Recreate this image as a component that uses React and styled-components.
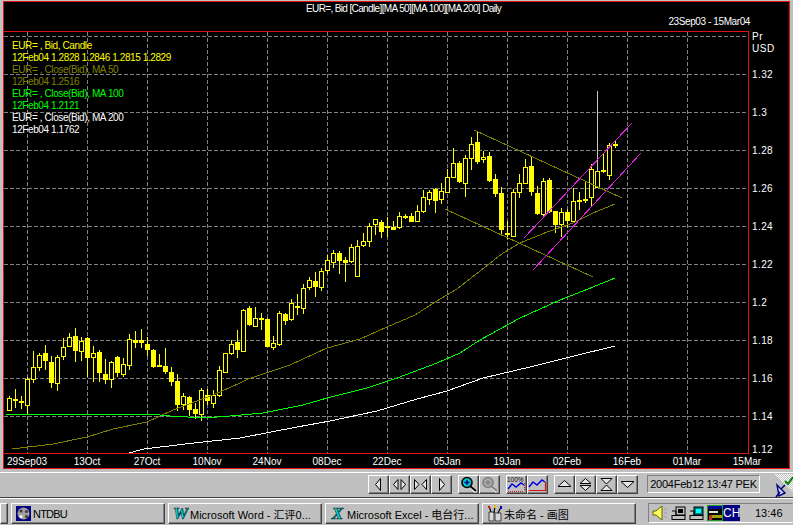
import React from "react";
import styled, { createGlobalStyle } from "styled-components";

const GlobalStyle = createGlobalStyle`
  html, body {
    margin: 0;
    padding: 0;
    background: #fff;
  }
  * {
    box-sizing: border-box;
  }
`;

const Desktop = styled.div`
  width: 793px;
  height: 525px;
  background: #c0c0c0;
  display: flex;
  flex-direction: column;
  padding-top: 1px;
  font-family: "Liberation Sans", Arial, "Noto Sans CJK SC", sans-serif;
  overflow: hidden;
`;

const ChartFrame = styled.div`
  width: 787px;
  height: 468px;
  margin-left: 3px;
  background: #000;
  border: 1px solid #e01010;
  color: #fff;
  font-size: 10px;
  flex: none;
  display: flex;
  flex-direction: column;
`;

const ChartHeader = styled.div`
  height: 29px;
  flex: none;
  line-height: 12px;
`;

const ChartTitle = styled.div`
  padding: 1px 0 0 302px;
  height: 14px;
  letter-spacing: -0.63px;
  white-space: nowrap;
`;

const ChartRange = styled.div`
  text-align: right;
  padding: 0 39px 0 0;
  letter-spacing: -0.4px;
`;

const ChartBody = styled.div`
  display: flex;
  height: 423px;
  flex: none;
`;

const Plot = styled.div`
  position: relative;
  width: 745px;
  height: 423px;
  border-top: 1px solid #e01010;
  border-right: 1px solid #e01010;
  border-bottom: 1px solid #e01010;
  svg {
    display: block;
  }
`;

const Legend = styled.div`
  position: absolute;
  left: 8px;
  top: 8px;
`;

const LegendLine = styled.div`
  height: 12px;
  line-height: 12px;
  white-space: nowrap;
  letter-spacing: -0.4px;
  color: ${(p) => p.$color};
`;

const PriceAxis = styled.div`
  flex: 1;
  display: flex;
  flex-direction: column;
  padding-left: 3px;
`;

const Unit = styled.div`
  height: 25px;
  flex: none;
  line-height: 12px;
  letter-spacing: 0.5px;
`;

const PriceLabel = styled.div`
  height: 38px;
  flex: none;
  line-height: 38px;
  letter-spacing: 0.4px;
  &:last-child {
    height: 18px;
    line-height: 27px;
  }
`;

const DateAxis = styled.div`
  display: grid;
  grid-template-columns: repeat(13, 60px);
  margin-left: -7px;
  padding-top: 1px;
  line-height: 13px;
  height: 14px;
  text-align: center;
  white-space: nowrap;
`;

const Toolbar = styled.div`
  height: 26px;
  margin-top: 3px;
  flex: none;
  border-top: 1px solid #fff;
  border-bottom: 1px solid #404040;
  display: flex;
  align-items: flex-start;
  gap: 6px;
  padding: 2px 0 0 368px;
`;

const ButtonGroup = styled.div`
  display: flex;
`;

const ToolButton = styled.div`
  width: 21px;
  height: 19px;
  background: #c0c0c0;
  border: 1px solid;
  border-color: #fff #404040 #404040 #fff;
  box-shadow: inset -1px -1px 0 #808080;
  display: flex;
  align-items: center;
  justify-content: center;
`;

const DateBox = styled.div`
  width: 119px;
  height: 18px;
  margin-left: 3px;
  border: 1px solid;
  border-color: #808080 #fff #fff #808080;
  font-size: 11px;
  letter-spacing: -0.25px;
  line-height: 16px;
  text-align: center;
  color: #000;
  white-space: nowrap;
`;

const LinkIcon = styled.div`
  margin: -1px 0 0 5px;
  line-height: 0;
`;

const Taskbar = styled.div`
  flex: 1;
  display: flex;
  gap: 3px;
  border-top: 1px solid #fff;
  padding-top: 4px;
`;

const TaskButton = styled.div`
  width: ${(p) => p.$width || 154}px;
  height: 21px;
  flex: none;
  background: #c0c0c0;
  border: 1px solid;
  border-color: #fff #404040 #404040 #fff;
  box-shadow: inset -1px -1px 0 #808080;
  display: flex;
  align-items: center;
  gap: ${(p) => p.$gap || 1}px;
  padding-left: ${(p) => p.$pad || 4}px;
  font-size: 11px;
  color: #000;
  white-space: nowrap;
  overflow: hidden;
`;

const TaskLabel = styled.span`
  letter-spacing: ${(p) => p.$spacing || 0}px;
`;

const Tray = styled.div`
  flex: 1;
  height: 20px;
  margin-left: 9px;
  border: 1px solid;
  border-color: #808080 #c0c0c0 #fff #808080;
  border-bottom: 1px solid #fff;
  display: flex;
  align-items: center;
  padding-left: 3px;
`;

const TrayIcons = styled.div`
  display: flex;
  align-items: center;
  gap: 3px;
`;

const LangBadge = styled.div`
  width: 17px;
  height: 16px;
  margin-left: -3px;
  background: #000080;
  color: #fff;
  font-size: 12px;
  line-height: 16px;
  text-align: center;
`;

const Clock = styled.div`
  margin-left: 15px;
  font-size: 11px;
  color: #000;
`;

// raw rows: wick top, wick bottom, body top, body bottom, kind (h hollow, f filled, d doji)
const toCandles = (base, rows) =>
  rows.map(([wt, wb, bt, bb, kind]) => ({
    wt: Math.round(base + wt / 3),
    wb: Math.round(base + wb / 3),
    bt: Math.round(base + bt / 3),
    bb: Math.round(base + bb / 3),
    kind,
  }));

const candles = [
  ...toCandles(320, [
    [228, 272, 235, 270, "h"], [208, 265, 238, 240, "d"], [228, 267, 243, 248, "f"], [172, 285, 178, 254, "h"],
    [93, 190, 142, 176, "h"], [98, 152, 106, 140, "h"], [75, 150, 100, 122, "f"], [108, 203, 126, 188, "f"],
    [105, 212, 112, 190, "h"], [55, 120, 80, 107, "h"], [38, 80, 52, 77, "h"], [25, 125, 48, 92, "f"],
    [52, 122, 62, 92, "h"], [50, 170, 55, 113, "f"], [78, 185, 100, 110, "h"], [90, 185, 97, 158, "f"],
    [118, 193, 162, 180, "f"], [122, 203, 127, 176, "h"], [108, 170, 111, 158, "f"], [115, 170, 133, 162, "h"],
    [43, 150, 57, 134, "h"], [33, 85, 60, 68, "f"], [27, 85, 60, 68, "f"], [50, 108, 72, 90, "f"],
    [88, 143, 90, 140, "f"], [102, 140, 135, 137, "d"], [85, 162, 138, 155, "f"], [140, 198, 156, 185, "f"],
    [162, 272, 183, 255, "f"], [218, 270, 229, 251, "h"], [228, 288, 232, 270, "f"], [250, 298, 267, 282, "f"],
    [204, 302, 211, 281, "h"], [207, 255, 226, 242, "f"], [210, 265, 226, 248, "h"], [138, 232, 151, 225, "h"],
    [98, 158, 99, 157, "h"], [60, 104, 73, 100, "h"], [30, 115, 67, 90, "f"],
  ]),
  ...toCandles(200, [
    [328, 455, 330, 452, "h"], [318, 378, 325, 375, "f"], [322, 380, 355, 377, "h"], [340, 390, 355, 358, "d"],
    [355, 442, 358, 440, "f"], [408, 450, 430, 440, "h"], [334, 438, 340, 432, "h"], [338, 375, 343, 362, "f"],
    [297, 362, 310, 358, "h"], [282, 345, 318, 322, "f"], [252, 342, 263, 323, "h"], [232, 270, 241, 260, "h"],
    [216, 290, 244, 260, "f"], [205, 272, 214, 260, "h"], [165, 222, 181, 209, "h"], [150, 204, 160, 185, "h"],
    [153, 222, 160, 182, "f"], [170, 245, 180, 188, "f"], [132, 190, 142, 182, "h"], [120, 232, 139, 227, "h"],
    [98, 140, 124, 134, "h"], [68, 140, 78, 122, "h"], [58, 105, 58, 73, "h"], [60, 113, 67, 95, "f"],
    [52, 112, 78, 80, "d"], [63, 90, 82, 89, "f"], [37, 87, 49, 80, "h"], [42, 57, 49, 51, "d"],
    [40, 67, 48, 65, "f"], [15, 65, 34, 62, "h"],
  ]),
  ...toCandles(90, [
    [300, 369, 321, 363, "h"], [300, 345, 307, 327, "h"], [295, 368, 297, 333, "f"], [278, 342, 304, 328, "h"],
    [238, 307, 262, 305, "h"], [175, 262, 220, 260, "h"], [212, 278, 220, 276, "f"], [195, 320, 205, 278, "h"],
    [140, 240, 163, 205, "h"], [122, 222, 156, 215, "f"], [182, 218, 202, 208, "h"], [187, 275, 198, 272, "f"],
    [252, 320, 268, 311, "f"], [290, 435, 310, 419, "f"], [393, 447, 430, 434, "f"], [298, 440, 307, 437, "h"],
    [252, 325, 280, 307, "h"], [207, 282, 232, 280, "h"], [197, 318, 229, 305, "f"], [287, 375, 310, 371, "f"],
    [264, 385, 274, 371, "h"], [264, 370, 271, 365, "f"], [362, 430, 364, 404, "f"], [354, 440, 367, 401, "h"],
    [358, 415, 367, 392, "f"], [295, 396, 334, 394, "h"], [305, 360, 330, 334, "f"], [277, 338, 327, 332, "f"],
    [222, 347, 236, 322, "h"], [230, 295, 244, 290, "h"], [190, 250, 241, 245, "f"], [158, 270, 166, 254, "h"],
    [150, 173, 162, 166, "f"],
  ]),
];

const ma50 = "12,449 53,444 87,437 113,429 147,422 173,410 213,395 240,383 248,379 290,365 327,348 360,339 387,327 415,315 440,299 457,289 480,271 503,253 520,243 547,232 573,223 593,213 615,204";
const ma100 = "5,414 40,415 60,414 150,414 170,416 205,418 230,416 263,413 303,405 327,398 367,388 397,378 437,363 460,353 480,340 520,318 560,300 588,289 615,278";
const ma200 = "125,454 144,449 185,444 240,438 297,427 330,421 377,411 417,399 447,391 483,378 530,367 570,357 615,346";

const hLines = [36, 74, 112, 150, 188, 226, 264, 302, 340, 378, 416];
const vLines = [27, 87, 147, 207, 267, 327, 387, 447, 507, 567, 627, 687];

function Candle({ index, c }) {
  const x = 9 + index * 6;
  return (
    <g>
      <line x1={x + 0.5} x2={x + 0.5} y1={c.wt} y2={c.wb} stroke="#ffff00" />
      {c.kind === "h" ? (
        <rect x={x - 1.5} y={c.bt + 0.5} width={4} height={c.bb - c.bt} fill="#000" stroke="#ffff00" />
      ) : (
        <rect x={x - 2} y={c.bt} width={5} height={Math.max(c.bb - c.bt, 2)} fill="#ffff00" />
      )}
    </g>
  );
}

function PriceChart() {
  return (
    <svg width="744" height="421" viewBox="4 32 744 421" shapeRendering="crispEdges">
      {hLines.map((y) => (
        <line key={y} x1="4" x2="748" y1={y + 0.5} y2={y + 0.5} stroke="#808080" strokeDasharray="4 2" />
      ))}
      {vLines.map((x) => (
        <line key={x} x1={x + 0.5} x2={x + 0.5} y1="32" y2="453" stroke="#808080" strokeDasharray="4 2" />
      ))}
      {candles.map((c, i) => (
        <Candle key={i} index={i} c={c} />
      ))}
      <line x1="597.5" x2="597.5" y1="91" y2="172" stroke="#c8c8c8" />
      <polyline points={ma50} fill="none" stroke="#808000" />
      <polyline points={ma100} fill="none" stroke="#00ff00" />
      <polyline points={ma200} fill="none" stroke="#fff" />
      <line x1="474" y1="130" x2="622" y2="198" stroke="#808000" />
      <line x1="445" y1="209" x2="593" y2="277" stroke="#808000" />
      <line x1="524" y1="238" x2="632" y2="123" stroke="#e020e0" />
      <line x1="533" y1="270" x2="641" y2="153" stroke="#e020e0" />
    </svg>
  );
}

const tri = { fill: "#e6e6e6", stroke: "#000", strokeWidth: 1 };

function Arrow({ points }) {
  return (
    <svg width="17" height="15" viewBox="0 0 17 15">
      {points.map((p) => (
        <polygon key={p} points={p} {...tri} />
      ))}
    </svg>
  );
}

const LEFT = "10.5,1.5 5.5,7.5 10.5,13.5";
const RIGHT = "6.5,1.5 11.5,7.5 6.5,13.5";

function Magnifier({ disabled }) {
  const ring = disabled ? "#808080" : "#000";
  const lens = disabled ? "#a8a8a8" : "#00c8c8";
  const mark = disabled ? "#808080" : "#000080";
  return (
    <svg width="18" height="17" viewBox="0 0 18 17">
      <line x1="10" y1="10" x2="16" y2="16" stroke={disabled ? "#e8e8e8" : "#fff"} strokeWidth="3" />
      <line x1="10" y1="10" x2="16" y2="15" stroke={ring} strokeWidth="2" />
      <circle cx="7" cy="6.5" r="5" fill={lens} stroke={ring} strokeWidth="1.6" />
      <path d="M4.5 6.5h5M7 4v5" stroke={mark} strokeWidth="1.4" />
    </svg>
  );
}

function PercentChartIcon() {
  return (
    <svg width="19" height="17" viewBox="0 0 19 17">
      <text x="0" y="6" fontSize="6.5" fontFamily="Liberation Sans, sans-serif" fill="#000">100%</text>
      <polyline points="1,13 5,8 9,11 14,7 17,9" fill="none" stroke="#0000e0" strokeWidth="1.5" />
      <path d="M1 15.5h16M17.5 7v8" stroke="#e01010" strokeDasharray="1 1" />
    </svg>
  );
}

function LineChartIcon() {
  return (
    <svg width="19" height="17" viewBox="0 0 19 17">
      <polyline points="1,11 5,6 9,9 14,4 17,6" fill="none" stroke="#0000e0" strokeWidth="1.5" />
      <path d="M1 14.5h16.5M17.5 6v9" stroke="#e01010" strokeWidth="1.2" />
    </svg>
  );
}

function SatelliteIcon() {
  return (
    <svg width="22" height="24" viewBox="0 0 22 24">
      <defs>
        <pattern id="dither" width="2" height="2" patternUnits="userSpaceOnUse">
          <rect width="1" height="1" fill="#fff" />
          <rect x="1" y="1" width="1" height="1" fill="#fff" />
        </pattern>
      </defs>
      <polygon points="3,0 22,0 22,18" fill="url(#dither)" />
      <path d="M6 11l8 8-6 3z" fill="#c8d0ff" stroke="#000080" strokeWidth="1.4" />
      <path d="M5 23l4-5M10 15l4-4" stroke="#000080" strokeWidth="1.6" />
      <path d="M14 7l3 3 5-7" fill="none" stroke="#008000" strokeWidth="2" />
    </svg>
  );
}

function ReelIcon() {
  return (
    <svg width="15" height="15" viewBox="0 0 15 15">
      <rect width="15" height="15" fill="#000080" />
      <circle cx="7.5" cy="7.5" r="6" fill="#a0a0a0" />
      <circle cx="5" cy="5" r="1.6" fill="#404040" />
      <circle cx="10.5" cy="5.5" r="1.6" fill="#404040" />
      <circle cx="5" cy="10.5" r="1.6" fill="#fff" />
      <circle cx="10.5" cy="10.5" r="1.6" fill="#404040" />
    </svg>
  );
}

function LetterIcon({ letter }) {
  return (
    <svg width="17" height="17" viewBox="0 0 17 17">
      <text
        x="8.5"
        y="14"
        textAnchor="middle"
        fontFamily="Liberation Serif, serif"
        fontWeight="700"
        fontStyle="italic"
        fontSize="17"
        fill="#00e0e0"
        stroke="#003838"
        strokeWidth="0.7"
      >
        {letter}
      </text>
    </svg>
  );
}

function PaintIcon() {
  return (
    <svg width="16" height="17" viewBox="0 0 16 17">
      <path d="M2 7h5v9H2zM8 8h6v8H8z" fill="#d8d8d8" stroke="#404040" />
      <path d="M4 7l-2-6M7 8l1-7M11 8l3-6" stroke="#000" strokeWidth="1.2" />
      <path d="M1 1h2v2H1z" fill="#e01010" />
      <path d="M7 0h2v3H7z" fill="#e0c000" />
      <path d="M13 1h2v3h-2z" fill="#0000c0" />
    </svg>
  );
}

function SpeakerIcon() {
  return (
    <svg width="16" height="16" viewBox="0 0 16 16">
      <polygon points="1,6 4,6 10,1 10,15 4,10 1,10" fill="#ffff60" stroke="#606000" />
      <path d="M12 5l3-2M12 8h3M12 11l3 2" stroke="#a0a0a0" />
    </svg>
  );
}

function ComputerIcon({ screen }) {
  return (
    <svg width="15" height="15" viewBox="0 0 15 15">
      <rect x="5" y="1" width="9" height="8" fill={screen} stroke="#000" />
      <rect x="7" y="3" width="5" height="4" fill={screen === "#c0c0c0" ? "#000" : "#00ffff"} />
      <rect x="1" y="9.5" width="13" height="4" fill="#c0c0c0" stroke="#000" />
      <path d="M1 5h4v4" fill="none" stroke="#000" />
    </svg>
  );
}

function AppIcon() {
  return (
    <svg width="16" height="16" viewBox="0 0 16 16">
      <rect width="16" height="16" fill="#20a020" />
      <rect x="1" y="1" width="14" height="14" fill="#000" />
      <rect x="1" y="1" width="14" height="3" fill="#0000a0" />
      <rect x="2" y="6" width="9" height="2" fill="#e0e0e0" />
      <rect x="5" y="10" width="10" height="3" fill="#a0a000" />
      <rect x="2" y="10" width="3" height="5" fill="#c03030" />
    </svg>
  );
}

const legend = [
  ["#ffff00", "EUR= , Bid, Candle"],
  ["#ffff00", "12Feb04 1.2828 1.2846 1.2815 1.2829"],
  ["#808000", "EUR= , Close(Bid), MA 50"],
  ["#808000", "12Feb04 1.2516"],
  ["#00ff00", "EUR= , Close(Bid), MA 100"],
  ["#00ff00", "12Feb04 1.2121"],
  ["#ffffff", "EUR= , Close(Bid), MA 200"],
  ["#ffffff", "12Feb04 1.1762"],
];

const prices = ["1.32", "1.3", "1.28", "1.26", "1.24", "1.22", "1.2", "1.18", "1.16", "1.14", "1.12"];
const dates = ["29Sep03", "13Oct", "27Oct", "10Nov", "24Nov", "08Dec", "22Dec", "05Jan", "19Jan", "02Feb", "16Feb", "01Mar", "15Mar"];

const UP = "8.5,3.5 2,9.5 15,9.5";
const DOWN = "2,4.5 15,4.5 8.5,10.5";

export default function App() {
  return (
    <>
      <GlobalStyle />
      <Desktop>
        <ChartFrame>
          <ChartHeader>
            <ChartTitle>EUR=, Bid [Candle][MA 50][MA 100][MA 200] Daily</ChartTitle>
            <ChartRange>23Sep03 - 15Mar04</ChartRange>
          </ChartHeader>
          <ChartBody>
            <Plot>
              <PriceChart />
              <Legend>
                {legend.map(([color, text]) => (
                  <LegendLine key={text} $color={color}>{text}</LegendLine>
                ))}
              </Legend>
            </Plot>
            <PriceAxis>
              <Unit>Pr<br />USD</Unit>
              {prices.map((p) => (
                <PriceLabel key={p}>{p}</PriceLabel>
              ))}
            </PriceAxis>
          </ChartBody>
          <DateAxis>
            {dates.map((d) => (
              <div key={d}>{d}</div>
            ))}
          </DateAxis>
        </ChartFrame>

        <Toolbar>
          <ButtonGroup>
            <ToolButton><Arrow points={[LEFT]} /></ToolButton>
            <ToolButton><Arrow points={["7,2.5 2.5,7.5 7,12.5", "10,2.5 14.5,7.5 10,12.5"]} /></ToolButton>
            <ToolButton><Arrow points={["2.5,2.5 7,7.5 2.5,12.5", "14.5,2.5 10,7.5 14.5,12.5"]} /></ToolButton>
            <ToolButton><Arrow points={[RIGHT]} /></ToolButton>
          </ButtonGroup>
          <ButtonGroup>
            <ToolButton><Magnifier /></ToolButton>
            <ToolButton><Magnifier disabled /></ToolButton>
          </ButtonGroup>
          <ButtonGroup>
            <ToolButton><PercentChartIcon /></ToolButton>
            <ToolButton><LineChartIcon /></ToolButton>
          </ButtonGroup>
          <ButtonGroup>
            <ToolButton><Arrow points={[UP]} /></ToolButton>
            <ToolButton><Arrow points={["8.5,1.5 3,6.5 14,6.5", "3,8.5 14,8.5 8.5,13.5"]} /></ToolButton>
            <ToolButton><Arrow points={["3,1.5 14,1.5 8.5,7", "8.5,8 14,13.5 3,13.5"]} /></ToolButton>
            <ToolButton><Arrow points={[DOWN]} /></ToolButton>
          </ButtonGroup>
          <DateBox>2004Feb12 13:47 PEK</DateBox>
          <LinkIcon><SatelliteIcon /></LinkIcon>
        </Toolbar>

        <Taskbar>
          <TaskButton $width={8} />
          <TaskButton $gap={2}><ReelIcon /><TaskLabel $spacing={-0.8}>NTDBU</TaskLabel></TaskButton>
          <TaskButton $pad={3}><LetterIcon letter="W" /><TaskLabel>Microsoft Word - 汇评0...</TaskLabel></TaskButton>
          <TaskButton $pad={3}><LetterIcon letter="X" /><TaskLabel>Microsoft Excel - 电台行...</TaskLabel></TaskButton>
          <TaskButton><PaintIcon /><TaskLabel>未命名 - 画图</TaskLabel></TaskButton>
          <Tray>
            <TrayIcons>
              <SpeakerIcon />
              <ComputerIcon screen="#c0c0c0" />
              <ComputerIcon screen="#008080" />
              <AppIcon />
              <LangBadge>CH</LangBadge>
            </TrayIcons>
            <Clock>13:46</Clock>
          </Tray>
        </Taskbar>
      </Desktop>
    </>
  );
}
